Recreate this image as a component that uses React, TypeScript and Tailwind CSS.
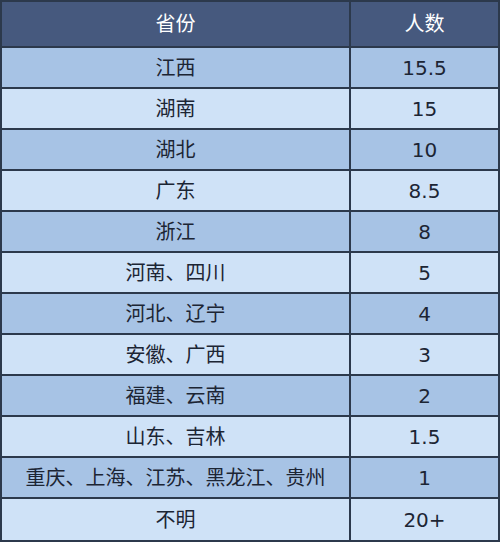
const rows: [string, string][] = [
  ['江西', '15.5'],
  ['湖南', '15'],
  ['湖北', '10'],
  ['广东', '8.5'],
  ['浙江', '8'],
  ['河南、四川', '5'],
  ['河北、辽宁', '4'],
  ['安徽、广西', '3'],
  ['福建、云南', '2'],
  ['山东、吉林', '1.5'],
  ['重庆、上海、江苏、黑龙江、贵州', '1'],
  ['不明', '20+'],
];

const cjk = "font-['Verdana','DejaVu_Sans','Noto_Sans_CJK_SC',sans-serif]";

export default function App() {
  return (
    <div className={`w-[500px] border-2 border-[#2c394c] bg-[#cfe2f7] text-[20px] text-[#1c2534] ${cjk}`}>
      <div className="flex h-[46px] border-b-2 border-[#2c394c] bg-[#46597e] text-white">
        <div className="flex w-[349px] items-center justify-center border-r-2 border-[#2c394c]">省份</div>
        <div className="flex flex-1 items-center justify-center">人数</div>
      </div>
      {rows.map(([name, count], i) => (
        <div
          key={name}
          className={`flex h-[41px] ${i < rows.length - 1 ? 'border-b-2' : ''} border-[#2c394c] ${i % 2 === 0 ? 'bg-[#a7c3e5]' : 'bg-[#cfe2f7]'}`}
        >
          <div className="flex w-[349px] items-center justify-center border-r-2 border-[#2c394c]">{name}</div>
          <div className="flex flex-1 items-center justify-center">{count}</div>
        </div>
      ))}
    </div>
  );
}
